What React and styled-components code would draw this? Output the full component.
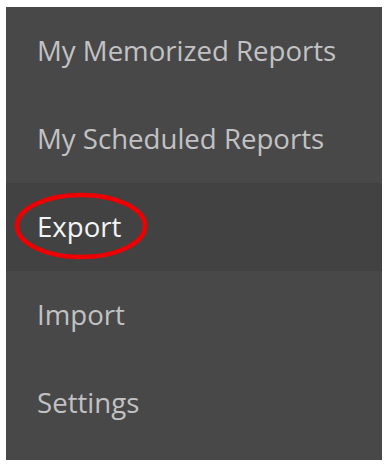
import React from 'react';
import styled, { createGlobalStyle } from 'styled-components';

const GlobalStyle = createGlobalStyle`
  html, body {
    margin: 0;
    padding: 0;
    background: #ffffff;
  }
`;

const Frame = styled.div`
  width: 388px;
  height: 467px;
  padding: 7px 6px;
  box-sizing: border-box;
`;

const Menu = styled.ul`
  list-style: none;
  margin: 0;
  padding: 0 0 13px;
  height: 100%;
  box-sizing: border-box;
  background: #484848;
  font-family: "Open Sans", "Noto Sans", sans-serif;
`;

const Item = styled.li`
  position: relative;
  height: 88px;
  display: flex;
  align-items: center;
  padding-left: 31px;
  font-size: 27.6px;
  color: ${props => props.$active ? '#f4f4f4' : '#c2c2c4'};
  background: ${props => props.$active ? '#424242' : 'transparent'};
`;

const Label = styled.span`
  position: relative;
  line-height: 1;
`;

/* hand-drawn red highlight around the active label */
const Circle = styled.svg`
  position: absolute;
  left: -22px;
  top: -20px;
  width: 134px;
  height: 68px;
  overflow: visible;
  pointer-events: none;
`;

const items = [
  'My Memorized Reports',
  'My Scheduled Reports',
  'Export',
  'Import',
  'Settings',
];

export default function App() {
  return (
    <>
      <GlobalStyle />
      <Frame>
        <Menu>
          {items.map(label => {
            const active = label === 'Export';
            return (
              <Item key={label} $active={active}>
                <Label>
                  {label}
                  {active && (
                    <Circle viewBox="0 0 134 68">
                      <ellipse cx="66" cy="33" rx="64" ry="31" fill="none" stroke="#ee0000" strokeWidth="4.5" />
                    </Circle>
                  )}
                </Label>
              </Item>
            );
          })}
        </Menu>
      </Frame>
    </>
  );
}
